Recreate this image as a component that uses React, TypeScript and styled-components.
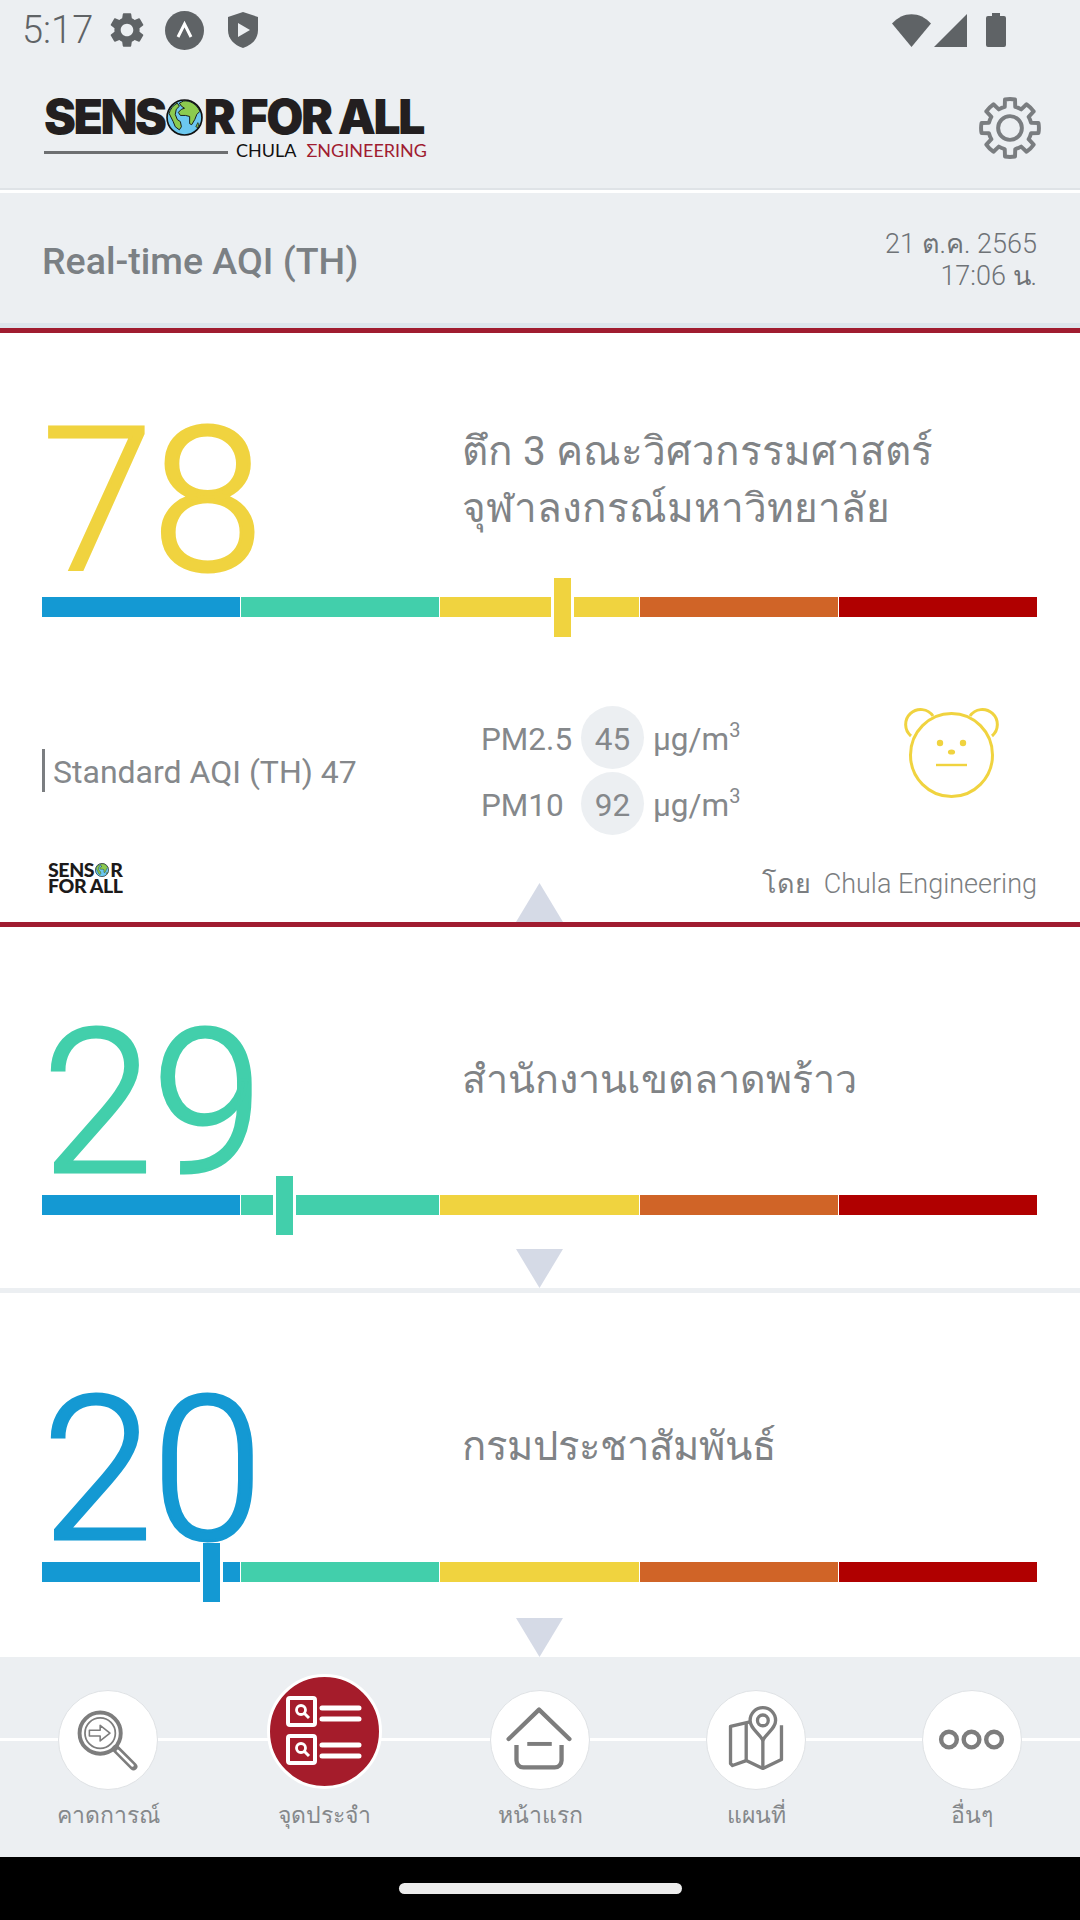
import React from 'react';
import styled, { createGlobalStyle } from 'styled-components';
import { MdSettings } from 'react-icons/md';

const BG = '#eceff2';
const TEXT = '#7b7e81';
const RED = '#a01c30';
const YELLOW = '#f0d33f';
const TEAL = '#42cfab';
const BLUE = '#1499d3';
const THAI = `Roboto, "Noto Sans", "DejaVu Sans", "Liberation Sans", sans-serif`;

const GlobalStyle = createGlobalStyle`
  html, body { margin: 0; padding: 0; background: #fff; }
  * { box-sizing: border-box; }
`;

const Screen = styled.div`
  width: 1080px;
  height: 1920px;
  overflow: hidden;
  display: flex;
  flex-direction: column;
  background: #fff;
  font-family: ${THAI};
  color: ${TEXT};
`;

const StatusBar = styled.div`
  height: 60px;
  background: ${BG};
  display: flex;
  align-items: center;
  padding: 0 74px 0 22px;
  color: #5f6366;
  svg { flex: none; fill: #5f6366; }
`;

const Clock = styled.span`
  font-size: 38px;
  font-weight: 300;
  width: 84px;
  line-height: 60px;
`;

const StatusLeft = styled.div`
  display: flex;
  align-items: center;
  gap: 17px;
  flex: 1;
`;

const StatusRight = styled.div`
  display: flex;
  align-items: center;
  gap: 3px;
`;

const TopBar = styled.header`
  height: 133px;
  background: ${BG};
  border-bottom: 3px solid #fff;
  box-shadow: inset 0 -2px 0 #dfe3e7;
  display: flex;
  justify-content: space-between;
  padding: 37px 39px 0 44px;
`;

const Logo = styled.div`
  width: 383px;
  display: flex;
  flex-direction: column;
`;

const LogoTitle = styled.div`
  display: flex;
  align-items: center;
  height: 38px;
  margin-top: 1px;
  font-family: Inter, Lato, sans-serif;
  font-weight: 900;
  font-size: 48px;
  line-height: 38px;
  color: #231f20;
  white-space: pre;
  letter-spacing: -2.4px;
`;

const LogoSub = styled.div`
  display: flex;
  align-items: center;
  margin-top: 6px;
  height: 16px;
  font-family: Lato, "Liberation Sans", sans-serif;
  font-size: 18px;
  color: #111;
`;

const LogoRule = styled.span`
  width: 188px;
  height: 3px;
  margin: 4px 8px 0 0;
  background: #6d6f71;
`;

const LogoRed = styled.span`
  margin-left: 10px;
  color: ${RED};
`;

const SubHeader = styled.div`
  height: 140px;
  background: ${BG};
  border-bottom: 5px solid ${RED};
  box-shadow: inset 0 -5px 0 #dde5ec;
  display: flex;
  align-items: center;
  justify-content: space-between;
  padding: 0 43px 0 42px;
`;

const SubTitle = styled.h1`
  margin: 0;
  font-size: 37.5px;
  font-weight: 500;
  color: #7b8084;
`;

const Stamp = styled.div`
  text-align: right;
  font-size: 27px;
  font-weight: 300;
  line-height: 32px;
  color: #6f7377;
  margin-bottom: 2px;
`;

const Card = styled.section<{ $height: number; $top: number; $line?: string }>`
  position: relative;
  flex: none;
  height: ${p => p.$height}px;
  padding: ${p => p.$top}px 43px 0 42px;
  display: flex;
  flex-direction: column;
  border-bottom: ${p => (p.$line ? `5px solid ${p.$line}` : '0')};
`;

const Headline = styled.div`
  display: grid;
  grid-template-columns: 420px 1fr;
  height: 195px;
`;

const Value = styled.div<{ $color: string; $drop?: number }>`
  font-size: 200px;
  font-weight: 300;
  line-height: 200px;
  letter-spacing: -1px;
  color: ${p => p.$color};
  -webkit-text-stroke: 3px ${p => p.$color};
  height: 195px;
  margin-top: ${p => p.$drop || 0}px;
`;

const Place = styled.div<{ $shift: number; $size: number }>`
  font-size: ${p => p.$size}px;
  font-weight: 400;
  line-height: 57px;
  color: #808386;
  margin-top: ${p => p.$shift}px;
`;

const Bar = styled.div`
  position: relative;
  display: grid;
  grid-template-columns: repeat(5, 1fr);
  gap: 1px;
  height: 20px;
  flex: none;
`;

const Segment = styled.div<{ $color: string }>`
  background: ${p => p.$color};
`;

const Marker = styled.div<{ $left: number; $color: string }>`
  position: absolute;
  left: ${p => p.$left}px;
  top: -19px;
  width: 23px;
  height: 59px;
  background: ${p => p.$color};
  background-clip: padding-box;
  border-left: 3px solid #fff;
  border-right: 3px solid #fff;
`;

const Details = styled.div`
  display: flex;
  align-items: center;
  margin-top: 89px;
  height: 129px;
`;

const Standard = styled.div`
  width: 439px;
  font-size: 32px;
  font-weight: 400;
  color: #85888b;
`;

const StandardLabel = styled.span`
  display: inline-block;
  border-left: 3px solid ${TEXT};
  line-height: 43px;
  padding: 2px 0 0 8px;
  height: 43px;
`;

const Readings = styled.div`
  width: 423px;
  display: flex;
  flex-direction: column;
  gap: 3px;
`;

const Reading = styled.div`
  display: flex;
  align-items: center;
  height: 63px;
  font-size: 31.5px;
  font-weight: 400;
  color: #85888b;
`;

const ReadingName = styled.span`
  width: 100px;
  margin-top: 4px;
`;

const Chip = styled.span`
  width: 63px;
  height: 63px;
  border-radius: 50%;
  background: ${BG};
  display: flex;
  align-items: center;
  justify-content: center;
  margin-right: 9px;
  padding-top: 4px;
`;

const Unit = styled.span`
  margin-top: 4px;
  sup {
    font-size: 20px;
    line-height: 0;
    vertical-align: 13px;
  }
`;

const Bear = styled.svg`
  align-self: flex-start;
  flex: none;
`;

const Footer = styled.div`
  margin-top: auto;
  display: grid;
  grid-template-columns: 1fr 47px 1fr;
  align-items: end;
`;

const SmallLogo = styled.div`
  padding: 0 0 28px 6px;
  font-family: Lato, Inter, sans-serif;
  font-weight: 900;
  font-size: 19.5px;
  line-height: 16px;
  letter-spacing: -0.4px;
  color: #1c1a1a;
  display: flex;
  flex-direction: column;
`;

const SmallLogoLine = styled.span`
  display: flex;
  align-items: center;
`;

const Credit = styled.div`
  text-align: right;
  font-size: 27px;
  font-weight: 300;
  line-height: 32px;
  padding-bottom: 22px;
`;

const Arrow = styled.div<{ $up?: boolean }>`
  width: 47px;
  height: 39px;
  background: #d5dae6;
  clip-path: ${p => (p.$up ? 'polygon(50% 0, 100% 100%, 0 100%)' : 'polygon(0 0, 100% 0, 50% 100%)')};
`;

const ArrowSlot = styled.div`
  margin-top: auto;
  align-self: center;
`;

const Nav = styled.nav`
  position: relative;
  flex: none;
  height: 200px;
  background: ${BG};
  display: grid;
  grid-template-columns: repeat(5, 216px);
  padding-top: 33px;
  &::before {
    content: '';
    position: absolute;
    left: 0;
    right: 0;
    top: 81px;
    height: 3px;
    background: #fff;
  }
`;

const NavItem = styled.div`
  position: relative;
  display: flex;
  flex-direction: column;
  align-items: center;
`;

const NavCircle = styled.div<{ $active?: boolean }>`
  width: ${p => (p.$active ? 115 : 100)}px;
  height: ${p => (p.$active ? 115 : 100)}px;
  margin-top: ${p => (p.$active ? -16 : 0)}px;
  margin-bottom: ${p => (p.$active ? 1 : 0)}px;
  border-radius: 50%;
  background: ${p => (p.$active ? '#a51c2b' : '#fff')};
  border: ${p => (p.$active ? '3px solid #fff' : '1px solid #dfe2e5')};
  display: flex;
  align-items: center;
  justify-content: center;
`;

const NavLabel = styled.span`
  margin-top: 11px;
  font-size: 23px;
  font-weight: 300;
  line-height: 30px;
  color: #85888b;
`;

const SystemBar = styled.div`
  flex: 1;
  background: #000;
  display: flex;
  justify-content: center;
  padding-top: 26px;
`;

const HomePill = styled.div`
  width: 283px;
  height: 11px;
  border-radius: 6px;
  background: #ececec;
`;

const Globe = ({ size }: { size: number }) => (
  <svg width={size} height={size} viewBox="0 0 36 36" style={{ flex: 'none', margin: '0 1px' }}>
    <circle cx="18" cy="18" r="17" fill="#6cc8ef" stroke="#111" strokeWidth="1.6" />
    <path d="M17 2c6-1 13 3 16 10l-3 3-2 5-3 5-2-1 0-7-4-1-5 0-2-3 3-3 3-1-3-2-2-3z" fill="#8ccb4f" stroke="#111" strokeWidth="0.9" />
    <path d="M3 14c1-4 4-8 8-10l2 3-3 3-1 5 2 5 3 2 1 5-2 3-4-3-2-5z" fill="#8ccb4f" stroke="#111" strokeWidth="0.9" />
    <path d="M29 27l2-4 1 1-1 4z" fill="#8ccb4f" stroke="#111" strokeWidth="0.7" />
  </svg>
);

const WifiIcon = () => (
  <svg width="39" height="33" viewBox="0 0 39 33">
    <path d="M0 9.5C11-3 28-3 39 9.5L19.5 33z" />
  </svg>
);

const SignalIcon = () => (
  <svg width="33" height="33" viewBox="0 0 33 33">
    <path d="M33 0v33H0z" />
  </svg>
);

const BatteryIcon = () => (
  <svg width="20" height="34" viewBox="0 0 20 34" style={{ marginLeft: 16 }}>
    <path d="M6 0h8v3h4a2 2 0 0 1 2 2v27a2 2 0 0 1-2 2H2a2 2 0 0 1-2-2V5a2 2 0 0 1 2-2h4z" />
  </svg>
);

const AppBadge = () => (
  <svg width="39" height="39" viewBox="0 0 39 39">
    <circle cx="19.5" cy="19.5" r="19.5" />
    <path d="M13 26l6.5-13 6.5 13" stroke="#fff" strokeWidth="3" style={{ fill: 'none' }} />
  </svg>
);

const ShieldPlay = () => (
  <svg width="30" height="36" viewBox="0 0 30 36" style={{ marginLeft: 7 }}>
    <path d="M15 0l15 5v13c0 9-6 15-15 18C6 33 0 27 0 18V5z" />
    <path d="M10 11l12 7-12 7z" style={{ fill: '#eceff2' }} />
  </svg>
);

// eight square teeth with rounded corners from the stroke join
const gearPath = (() => {
  const at = (r: number, deg: number) => {
    const t = (deg * Math.PI) / 180;
    return `${(30 + r * Math.cos(t)).toFixed(2)} ${(30 + r * Math.sin(t)).toFixed(2)}`;
  };
  let d = '';
  for (let i = 0; i < 8; i++) {
    const a = i * 45 - 90;
    d += `${i ? 'A21 21 0 0 1' : 'M'}${at(21, a - 14)}L${at(28, a - 10)}A28 28 0 0 1 ${at(28, a + 10)}L${at(21, a + 14)}`;
  }
  return d + 'A21 21 0 0 1 ' + at(21, -104) + 'Z';
})();

const GearIcon = () => (
  <svg width="62" height="62" viewBox="0 0 60 60" fill="none" stroke="#7a7d80" strokeWidth="3.8" strokeLinejoin="round">
    <path d={gearPath} />
    <circle cx="30" cy="30" r="11.5" />
  </svg>
);

const BearFace = () => (
  <Bear width="96" height="92" viewBox="0 0 96 92" fill="none" stroke={YELLOW} strokeWidth="3">
    <path d="M29 10A15 15 0 1 0 7 30" />
    <path d="M66 10A15 15 0 1 1 88 30" />
    <ellipse cx="47.5" cy="49" rx="41" ry="41.5" />
    <circle cx="36" cy="37" r="3.2" fill={YELLOW} stroke="none" />
    <circle cx="59" cy="37" r="3.2" fill={YELLOW} stroke="none" />
    <ellipse cx="47.5" cy="46" rx="3.6" ry="2.6" fill={YELLOW} stroke="none" />
    <path d="M32 59h31" strokeWidth="2.4" />
  </Bear>
);

const ForecastIcon = () => (
  <svg width="100" height="100" viewBox="0 0 100 100" fill="none" stroke="#7d7d7d">
    <circle cx="42" cy="43" r="21" strokeWidth="4" />
    <circle cx="42" cy="43" r="15.5" strokeWidth="1.8" />
    <path d="M31 40h11v-5l10 8-10 8v-5H31z" strokeWidth="1.6" strokeLinejoin="round" />
    <path d="M58 59l18 18" strokeWidth="8" strokeLinecap="round" />
    <path d="M60 61l15 15" stroke="#fff" strokeWidth="2.6" strokeLinecap="round" />
  </svg>
);

const ListIcon = () => (
  <svg width="109" height="109" viewBox="0 0 109 109" fill="none" stroke="#fff">
    <rect x="18" y="21" width="27" height="27" rx="2" strokeWidth="4" />
    <rect x="18" y="59" width="27" height="27" rx="2" strokeWidth="4" />
    <circle cx="31" cy="33" r="4.5" strokeWidth="2.8" />
    <path d="M34 36l5 5" strokeWidth="3" />
    <circle cx="31" cy="71" r="4.5" strokeWidth="2.8" />
    <path d="M34 74l5 5" strokeWidth="3" />
    <path d="M52 31h37M52 42h37M52 68h37M52 79h37" strokeWidth="5" strokeLinecap="round" />
  </svg>
);

const HomeIcon = () => (
  <svg width="100" height="100" viewBox="0 0 100 100" fill="none" stroke="#7d7d7d" strokeWidth="4.4">
    <path d="M18 49l31-30 31 30" strokeLinecap="round" strokeLinejoin="round" />
    <path d="M26 55v16a7 7 0 0 0 7 7h32a7 7 0 0 0 7-7V55" strokeLinecap="butt" />
    <path d="M37 54h25" strokeWidth="4" />
  </svg>
);

const MapIcon = () => (
  <svg width="100" height="100" viewBox="0 0 100 100" fill="none" stroke="#7d7d7d" strokeWidth="3.4" strokeLinejoin="round">
    <path d="M46 31l-22 5v38l2 2 14-5 17 8 19-9V35" />
    <path d="M40 32v39M57 50v29" />
    <path d="M57 50c-5-8-13-12-13-20a13 13 0 0 1 26 0c0 8-8 12-13 20z" fill="#fff" />
    <circle cx="57" cy="30" r="5.5" />
  </svg>
);

const MoreIcon = () => (
  <svg width="100" height="100" viewBox="0 0 100 100" fill="none" stroke="#7d7d7d" strokeWidth="4.5">
    <circle cx="26.5" cy="49.5" r="8" />
    <circle cx="49.5" cy="49.5" r="8" />
    <circle cx="72.5" cy="49.5" r="8" />
  </svg>
);

const COLORS = [BLUE, TEAL, YELLOW, '#d06427', '#b00000'];

const Gauge = ({ left, color }: { left: number; color: string }) => (
  <Bar>
    {COLORS.map(c => <Segment key={c} $color={c} />)}
    <Marker $left={left} $color={color} />
  </Bar>
);

export default function App() {
  return (
    <Screen>
      <GlobalStyle />
      <StatusBar>
        <Clock>5:17</Clock>
        <StatusLeft>
          <MdSettings size={42} />
          <AppBadge />
          <ShieldPlay />
        </StatusLeft>
        <StatusRight>
          <WifiIcon />
          <SignalIcon />
          <BatteryIcon />
        </StatusRight>
      </StatusBar>

      <TopBar>
        <Logo>
          <LogoTitle>SENS<Globe size={37} />R FOR ALL</LogoTitle>
          <LogoSub>
            <LogoRule />
            CHULA
            <LogoRed>ΣNGINEERING</LogoRed>
          </LogoSub>
        </Logo>
        <GearIcon />
      </TopBar>

      <SubHeader>
        <SubTitle>Real-time AQI (TH)</SubTitle>
        <Stamp>21 ต.ค. 2565<br />17:06 น.</Stamp>
      </SubHeader>

      <Card $height={594} $top={69} $line={RED}>
        <Headline>
          <Value $color={YELLOW}>78</Value>
          <Place $shift={21} $size={40.5}>ตึก 3 คณะวิศวกรรมศาสตร์<br />จุฬาลงกรณ์มหาวิทยาลัย</Place>
        </Headline>
        <Gauge left={509} color={YELLOW} />
        <Details>
          <Standard><StandardLabel>Standard AQI (TH) 47</StandardLabel></Standard>
          <Readings>
            <Reading>
              <ReadingName>PM2.5</ReadingName>
              <Chip>45</Chip>
              <Unit>µg/m<sup>3</sup></Unit>
            </Reading>
            <Reading>
              <ReadingName>PM10</ReadingName>
              <Chip>92</Chip>
              <Unit>µg/m<sup>3</sup></Unit>
            </Reading>
          </Readings>
          <BearFace />
        </Details>
        <Footer>
          <SmallLogo>
            <SmallLogoLine>SENS<Globe size={14} />R</SmallLogoLine>
            <SmallLogoLine>FOR ALL</SmallLogoLine>
          </SmallLogo>
          <Arrow $up />
          <Credit>โดย&nbsp; Chula Engineering</Credit>
        </Footer>
      </Card>

      <Card $height={366} $top={73} $line={BG}>
        <Headline>
          <Value $color={TEAL} $drop={4}>29</Value>
          <Place $shift={51} $size={39.5}>สำนักงานเขตลาดพร้าว</Place>
        </Headline>
        <Gauge left={231} color={TEAL} />
        <ArrowSlot><Arrow /></ArrowSlot>
      </Card>

      <Card $height={364} $top={74}>
        <Headline>
          <Value $color={BLUE} $drop={4}>20</Value>
          <Place $shift={51} $size={40}>กรมประชาสัมพันธ์</Place>
        </Headline>
        <Gauge left={158} color={BLUE} />
        <ArrowSlot><Arrow /></ArrowSlot>
      </Card>

      <Nav>
        <NavItem>
          <NavCircle><ForecastIcon /></NavCircle>
          <NavLabel>คาดการณ์</NavLabel>
        </NavItem>
        <NavItem>
          <NavCircle $active><ListIcon /></NavCircle>
          <NavLabel>จุดประจำ</NavLabel>
        </NavItem>
        <NavItem>
          <NavCircle><HomeIcon /></NavCircle>
          <NavLabel>หน้าแรก</NavLabel>
        </NavItem>
        <NavItem>
          <NavCircle><MapIcon /></NavCircle>
          <NavLabel>แผนที่</NavLabel>
        </NavItem>
        <NavItem>
          <NavCircle><MoreIcon /></NavCircle>
          <NavLabel>อื่นๆ</NavLabel>
        </NavItem>
      </Nav>

      <SystemBar><HomePill /></SystemBar>
    </Screen>
  );
}
